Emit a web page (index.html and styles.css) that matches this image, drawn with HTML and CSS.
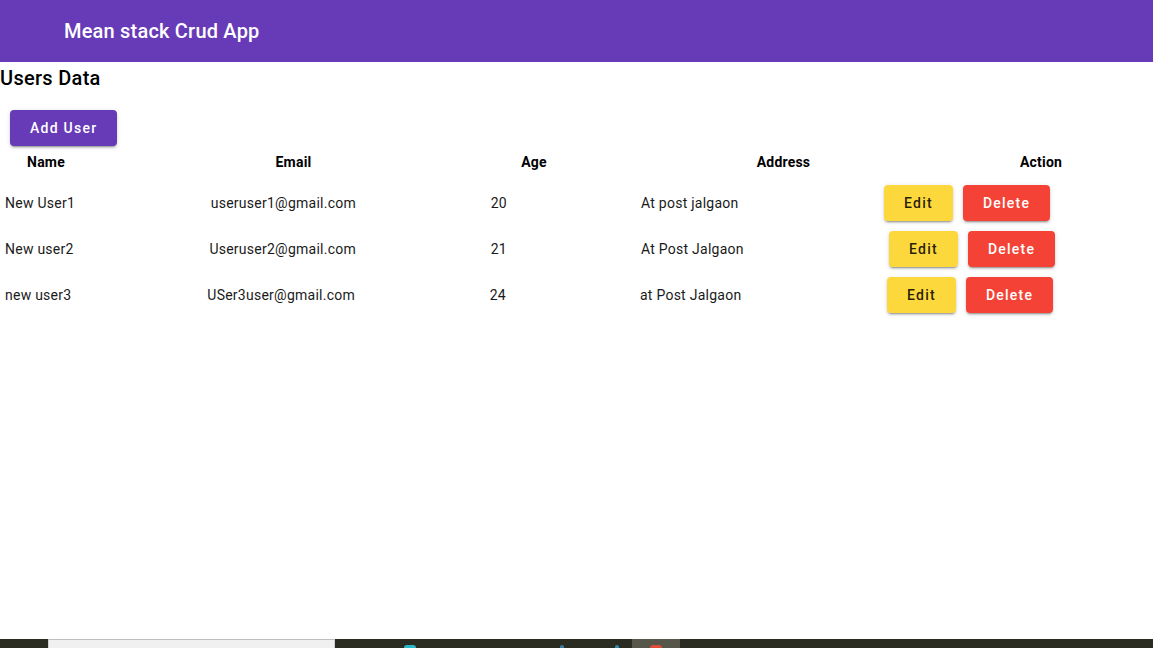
FILE: index.html
```html
<!DOCTYPE html>
<html lang="en">
<head>
<meta charset="utf-8">
<title>Mean stack Crud App</title>
<link rel="stylesheet" href="styles.css">
</head>
<body>
<div class="page">
  <header class="toolbar">
    <span class="toolbar-title">Mean stack Crud App</span>
  </header>
  <main class="content">
    <h2 class="heading">Users Data</h2>
    <div class="add-bar">
      <button class="btn btn-primary">Add User</button>
    </div>
    <div class="table">
      <div class="thead">
        <div class="th">Name</div>
        <div class="th">Email</div>
        <div class="th">Age</div>
        <div class="th">Address</div>
        <div class="th">Action</div>
      </div>
      <div class="trow">
        <div class="td td-name">New User1</div>
        <div class="td td-email">useruser1@gmail.com</div>
        <div class="td td-age">20</div>
        <div class="td td-address">At post jalgaon</div>
        <div class="td td-actions">
          <button class="btn btn-edit">Edit</button>
          <button class="btn btn-delete">Delete</button>
        </div>
      </div>
      <div class="trow">
        <div class="td td-name">New user2</div>
        <div class="td td-email">Useruser2@gmail.com</div>
        <div class="td td-age">21</div>
        <div class="td td-address">At Post Jalgaon</div>
        <div class="td td-actions">
          <button class="btn btn-edit">Edit</button>
          <button class="btn btn-delete">Delete</button>
        </div>
      </div>
      <div class="trow">
        <div class="td td-name">new user3</div>
        <div class="td td-email">USer3user@gmail.com</div>
        <div class="td td-age">24</div>
        <div class="td td-address">at Post Jalgaon</div>
        <div class="td td-actions">
          <button class="btn btn-edit">Edit</button>
          <button class="btn btn-delete">Delete</button>
        </div>
      </div>
    </div>
  </main>
  <footer class="taskbar">
    <div class="taskbar-search"></div>
    <div class="taskbar-icons">
      <span class="tb-icon tb-cyan"></span>
      <span class="tb-icon tb-blue"></span>
      <span class="tb-icon tb-teal"></span>
      <span class="tb-active"><span class="tb-icon tb-red"></span></span>
    </div>
  </footer>
</div>
</body>
</html>
```

FILE: styles.css
```css
* {
  box-sizing: border-box;
}

html, body {
  margin: 0;
  padding: 0;
}

body {
  font-family: Roboto, "Helvetica Neue", sans-serif;
  font-size: 14px;
  color: rgba(0, 0, 0, 0.87);
  background: #ffffff;
}

.page {
  min-height: 100vh;
  display: flex;
  flex-direction: column;
}

.toolbar {
  height: 62px;
  background: #673ab7;
  color: #ffffff;
  display: flex;
  align-items: center;
  padding-left: 64px;
  flex-shrink: 0;
}

.toolbar-title {
  font-size: 20px;
  font-weight: 500;
  line-height: 32px;
  letter-spacing: 0.2px;
}

.content {
  flex: 1;
}

.heading {
  margin: 0 0 16px;
  font-size: 20px;
  font-weight: 500;
  line-height: 32px;
  letter-spacing: 0.3px;
  color: #000000;
}

.add-bar {
  display: flex;
  padding-left: 10px;
}

.btn {
  font-family: Roboto, "Helvetica Neue", sans-serif;
  font-size: 14px;
  font-weight: 500;
  letter-spacing: 1.25px;
  height: 36px;
  line-height: 36px;
  padding: 0 20px;
  min-width: 64px;
  border: none;
  border-radius: 4px;
  cursor: pointer;
  box-shadow: 0 3px 1px -2px rgba(0, 0, 0, 0.2),
              0 2px 2px 0 rgba(0, 0, 0, 0.14),
              0 1px 5px 0 rgba(0, 0, 0, 0.12);
}

.btn-primary {
  background: #673ab7;
  color: #ffffff;
}

.btn-edit {
  background: #fdd83c;
  color: rgba(0, 0, 0, 0.87);
}

.btn-delete {
  background: #f44336;
  color: #ffffff;
}

.thead {
  display: grid;
  grid-template-columns: 92px 403px 78px 421px 94px;
  padding: 6px 0 8px;
}

.th {
  text-align: center;
  font-weight: 700;
  line-height: 20px;
  letter-spacing: 0.2px;
  color: #000000;
}

.trow {
  display: grid;
  grid-template-columns: 200px 156px 151px 373px 1fr;
  align-items: center;
  height: 46px;
}

.td {
  line-height: 20px;
  letter-spacing: 0.25px;
  color: #1a1a1a;
}

.td-name {
  padding-left: 5px;
}

.td-email {
  text-align: right;
}

.td-age {
  text-align: right;
}

.td-address {
  padding-left: 134px;
}

.td-actions {
  display: flex;
  gap: 10px;
  padding-left: 4px;
}

.trow:nth-child(3) .td-actions {
  padding-left: 9px;
}

.trow:nth-child(4) .td-actions {
  padding-left: 7px;
}

.trow:nth-child(4) .td-email,
.trow:nth-child(4) .td-age {
  padding-right: 1px;
}

.trow:nth-child(4) .td-address {
  padding-left: 133px;
}

.taskbar {
  height: 9px;
  background: #2b2c21;
  display: flex;
  flex-shrink: 0;
  overflow: hidden;
}

.taskbar-search {
  margin-left: 48px;
  width: 287px;
  background: #f0f0f0;
  border-top: 1px solid #bdbdbd;
  border-left: 1px solid #cfcfcf;
  border-right: 1px solid #cfcfcf;
}

.taskbar-icons {
  display: flex;
  align-items: flex-end;
  height: 100%;
}

.tb-icon {
  display: block;
  height: 3px;
  border-radius: 6px 6px 0 0;
}

.tb-cyan {
  width: 12px;
  margin-left: 69px;
  background: #29b6c6;
}

.tb-blue {
  width: 4px;
  margin-left: 144px;
  background: #3a7ca0;
}

.tb-teal {
  width: 4px;
  margin-left: 51px;
  background: #2f8ca6;
}

.tb-active {
  display: flex;
  align-items: flex-end;
  justify-content: center;
  width: 48px;
  height: 100%;
  margin-left: 13px;
  background: #56574a;
}

.tb-red {
  width: 12px;
  background: #e04a3a;
}
```
